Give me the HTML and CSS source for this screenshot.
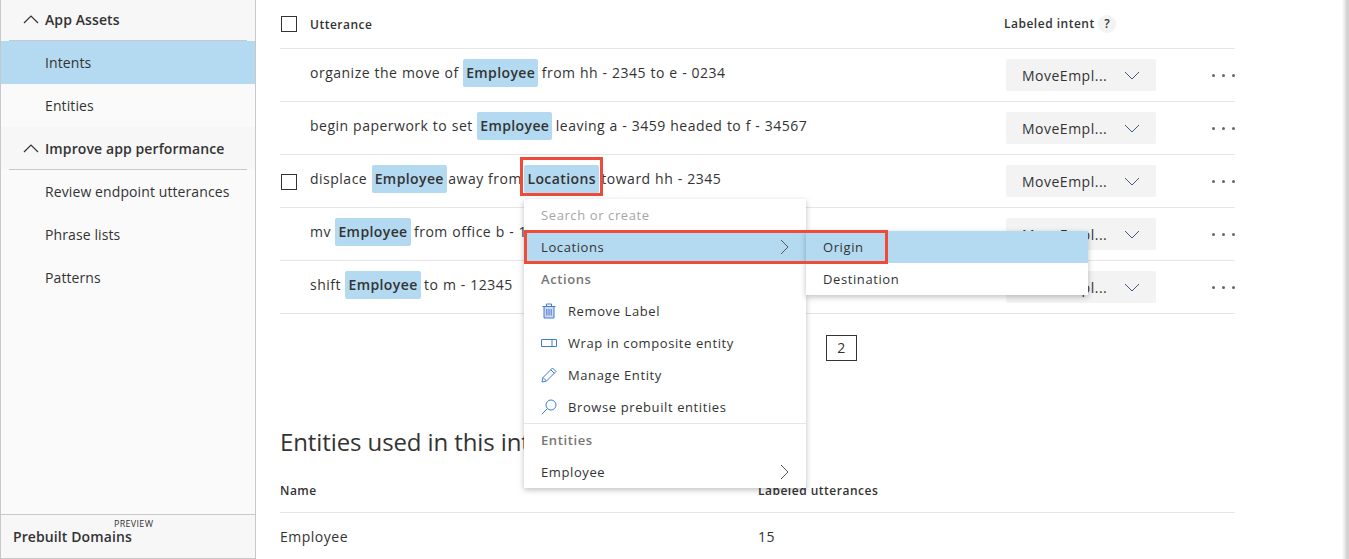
FILE: index.html
```html
<!DOCTYPE html>
<html lang="en">

<head>
    <meta charset="UTF-8">
    <title>Intents</title>
    <link rel="stylesheet" href="styles.css">
</head>

<body>
    <div class="app">
        <nav class="sidebar">
            <div class="nav-scroll">
                <div class="nav-head nav-head-first">
                    <svg class="caret" width="16" height="9" viewBox="0 0 16 9"><path d="M1 8L8 1l7 7" /></svg>
                    App Assets
                </div>
                <a class="nav-item active">Intents</a>
                <a class="nav-item">Entities</a>
                <div class="nav-head">
                    <svg class="caret" width="16" height="9" viewBox="0 0 16 9"><path d="M1 8L8 1l7 7" /></svg>
                    Improve app performance
                </div>
                <a class="nav-item">Review endpoint utterances</a>
                <a class="nav-item">Phrase lists</a>
                <a class="nav-item">Patterns</a>
            </div>
            <div class="nav-foot">
                <span class="preview">PREVIEW</span>
                <span class="foot-title">Prebuilt Domains</span>
            </div>
        </nav>

        <main class="content">
            <div class="table-row table-top">
                <div class="check-cell"><span class="check"></span></div>
                <div class="text-cell head-text">Utterance</div>
                <div class="head-text">Labeled intent <span class="help">?</span></div>
            </div>

            <div class="table-row">
                <div class="check-cell"></div>
                <div class="text-cell">organize the move of <span class="tag">Employee</span> from hh - 2345 to e - 0234</div>
                <div class="intent-cell"><div class="intent">MoveEmpl...<svg width="16" height="9" viewBox="0 0 16 9"><path d="M1 1l7 7 7-7" /></svg></div></div>
                <div class="more-cell"><span class="dot"></span><span class="dot"></span><span class="dot"></span></div>
            </div>
            <div class="table-row">
                <div class="check-cell"></div>
                <div class="text-cell">begin paperwork to set <span class="tag">Employee</span> leaving a - 3459 headed to f - 34567</div>
                <div class="intent-cell"><div class="intent">MoveEmpl...<svg width="16" height="9" viewBox="0 0 16 9"><path d="M1 1l7 7 7-7" /></svg></div></div>
                <div class="more-cell"><span class="dot"></span><span class="dot"></span><span class="dot"></span></div>
            </div>
            <div class="table-row">
                <div class="check-cell"><span class="check"></span></div>
                <div class="text-cell">displace <span class="tag tag-first">Employee</span> away from <span class="tag tag-second">Locations</span> toward hh - 2345</div>
                <div class="intent-cell"><div class="intent">MoveEmpl...<svg width="16" height="9" viewBox="0 0 16 9"><path d="M1 1l7 7 7-7" /></svg></div></div>
                <div class="more-cell"><span class="dot"></span><span class="dot"></span><span class="dot"></span></div>
            </div>
            <div class="table-row">
                <div class="check-cell"></div>
                <div class="text-cell">mv <span class="tag">Employee</span> from office b - 1</div>
                <div class="intent-cell"><div class="intent">MoveEmpl...<svg width="16" height="9" viewBox="0 0 16 9"><path d="M1 1l7 7 7-7" /></svg></div></div>
                <div class="more-cell"><span class="dot"></span><span class="dot"></span><span class="dot"></span></div>
            </div>
            <div class="table-row">
                <div class="check-cell"></div>
                <div class="text-cell">shift <span class="tag">Employee</span> to m - 12345</div>
                <div class="intent-cell"><div class="intent">MoveEmpl...<svg width="16" height="9" viewBox="0 0 16 9"><path d="M1 1l7 7 7-7" /></svg></div></div>
                <div class="more-cell"><span class="dot"></span><span class="dot"></span><span class="dot"></span></div>
            </div>

            <div class="pager"><span class="page">2</span></div>

            <h2 class="section-title">Entities used in this intent</h2>

            <div class="entity-row entity-top">
                <div class="entity-name head-text">Name</div>
                <div class="head-text">Labeled utterances</div>
            </div>
            <div class="entity-row">
                <div class="entity-name">Employee</div>
                <div>15</div>
            </div>
        </main>

        <div class="panel-edge"></div>
    </div>

    <!-- popups over the table -->
    <div class="mark mark-tag"></div>

    <div class="menu">
        <div class="menu-row search-hint">Search or create</div>
        <div class="menu-row selected">Locations
            <svg class="arrow" width="9" height="16" viewBox="0 0 9 16"><path d="M1 1l7 7-7 7" /></svg>
        </div>
        <div class="menu-row menu-label">Actions</div>
        <div class="menu-row icon-row">
            <svg class="menu-icon" width="16" height="16" viewBox="0 0 16 16">
                <path class="fill-soft" d="M3 3.5h10V15H3z" />
                <path d="M1.5 3.5h13M5.5 3.5V1h5v2.5M3 3.5V15h10V3.5M5.8 6v6.5M8 6v6.5M10.2 6v6.5" />
            </svg>
            Remove Label
        </div>
        <div class="menu-row icon-row">
            <svg class="menu-icon" width="16" height="16" viewBox="0 0 16 16">
                <path d="M.5 4.5h15v7H.5zM11 4.5v7" />
            </svg>
            Wrap in composite entity
        </div>
        <div class="menu-row icon-row">
            <svg class="menu-icon" width="16" height="16" viewBox="0 0 16 16">
                <path d="M1 15l1-4.5L11.5 1 15 4.5 5.5 14zM2 10.5L5.5 14M9.8 2.8l3.4 3.4" />
            </svg>
            Manage Entity
        </div>
        <div class="menu-row icon-row">
            <svg class="menu-icon" width="16" height="16" viewBox="0 0 16 16">
                <circle cx="10" cy="6" r="5" />
                <path d="M6.4 9.6L.8 15.2" />
            </svg>
            Browse prebuilt entities
        </div>
        <div class="menu-row menu-label menu-split">Entities</div>
        <div class="menu-row">Employee
            <svg class="arrow" width="9" height="16" viewBox="0 0 9 16"><path d="M1 1l7 7-7 7" /></svg>
        </div>
    </div>

    <div class="menu submenu">
        <div class="menu-row selected">Origin</div>
        <div class="menu-row">Destination</div>
    </div>

    <div class="mark mark-menu"></div>
</body>

</html>
```
FILE: styles.css
```css
* {
    box-sizing: border-box;
}

html,
body {
    height: 100%;
}

body {
    margin: 0;
    overflow: hidden;
    background: white;
    color: #333;
    font-family: "Open Sans", Arial, sans-serif;
    font-size: 14px;
    letter-spacing: 0.1px;
}

.app {
    display: flex;
    height: 559px;
}

.sidebar {
    width: 256px;
    flex: none;
    display: flex;
    flex-direction: column;
    background: #fafafa;
    border-left: 1px solid #c8c8c8;
    border-right: 1px solid #c8c8c8;
    border-bottom: 1px solid #c8c8c8;
}

.nav-scroll {
    flex: 1;
}

.nav-head {
    height: 43px;
    padding-left: 22px;
    display: flex;
    align-items: center;
    gap: 6px;
    background: #f7f7f7;
    font-weight: 600;
    position: relative;
}

.nav-head::after {
    content: "";
    position: absolute;
    left: 8px;
    right: 8px;
    bottom: 0;
    border-bottom: 1px solid #c8c8c8;
}

.nav-head-first {
    height: 41px;
    padding-bottom: 2px;
}

.caret {
    fill: none;
    stroke: #333;
    stroke-width: 1.2;
}

.nav-item {
    display: flex;
    align-items: center;
    height: 43px;
    padding-left: 44px;
}

.nav-item.active {
    background: #b3daf1;
}

.nav-foot {
    height: 44px;
    padding-left: 12px;
    background: #f7f7f7;
    border-top: 1px solid #c8c8c8;
    position: relative;
}

.preview {
    position: absolute;
    left: 113px;
    top: 2px;
    font-size: 9px;
    letter-spacing: 0.3px;
}

.foot-title {
    display: block;
    padding-top: 12px;
    font-weight: 600;
}

.content {
    flex: 1;
    padding-left: 24px;
    min-width: 0;
    letter-spacing: 0.5px;
}

.table-row {
    width: 955px;
    height: 53px;
    display: flex;
    align-items: center;
    border-bottom: 1px solid #e6e6e6;
}

.table-top {
    height: 49px;
}

.check-cell {
    width: 30px;
    flex: none;
    padding-left: 1px;
    display: flex;
    padding-top: 1px;
}

.table-top .check-cell {
    padding-top: 0;
}

.check {
    width: 16px;
    height: 16px;
    border: 1px solid #333;
}

.text-cell {
    width: 696px;
    flex: none;
    padding-bottom: 4px;
    white-space: nowrap;
    overflow: hidden;
    word-spacing: 0.3px;
}

.head-text {
    font-size: 12px;
    font-weight: 600;
}

.table-top .text-cell {
    width: 694px;
    padding-bottom: 0;
}

.help {
    display: inline-block;
    width: 18px;
    height: 18px;
    border-radius: 50%;
    background: #f3f3f3;
    text-align: center;
    line-height: 18px;
    vertical-align: middle;
}

.tag {
    display: inline-block;
    height: 28px;
    line-height: 28px;
    padding: 0 3px;
    margin-right: -1px;
    border-radius: 2px;
    background: #b3daf1;
    font-weight: 600;
    letter-spacing: 0.4px;
}

.tag-first {
    margin-right: -3px;
}

.tag-second {
    margin-left: -2px;
    margin-right: -2px;
}

.intent-cell {
    width: 206px;
    flex: none;
}

.intent {
    width: 150px;
    height: 32px;
    padding-left: 16px;
    display: flex;
    align-items: center;
    justify-content: space-between;
    padding-right: 16px;
    border-radius: 2px;
    background: #f3f3f3;
}

.intent svg {
    fill: none;
    stroke: #2b4a6b;
    stroke-width: 0.9;
}

.more-cell {
    width: 23px;
    flex: none;
    display: flex;
    gap: 7px;
    padding-top: 1px;
    overflow: hidden;
}

.dot {
    width: 3px;
    height: 3px;
    flex: none;
    border-radius: 50%;
    background: #666;
}

.pager {
    padding: 21px 0 0 546px;
}

.page {
    display: block;
    width: 31px;
    height: 26px;
    border: 1px solid #333;
    text-align: center;
    line-height: 24px;
}

.section-title {
    margin: 65px 0 0;
    font-size: 24px;
    line-height: 32px;
    font-weight: 400;
    white-space: nowrap;
    letter-spacing: -0.1px;
}

.entity-row {
    width: 955px;
    display: flex;
    align-items: center;
    height: 47px;
}

.entity-top {
    height: 55px;
    padding-top: 10px;
    border-bottom: 1px solid #e6e6e6;
}

.entity-name {
    width: 478px;
    flex: none;
}

.panel-edge {
    width: 9px;
    flex: none;
    background: linear-gradient(to right, #fff 0%, #fff 20%, #eee 45%, #ccc 85%, #d8d8d8 100%);
}

.menu {
    position: absolute;
    left: 524px;
    top: 199px;
    width: 282px;
    background: white;
    box-shadow: 0 2px 6px rgba(0, 0, 0, 0.25);
    letter-spacing: 0.6px;
}

.submenu {
    left: 806px;
    top: 231px;
}

.menu-row {
    height: 32px;
    padding: 0 17px;
    display: flex;
    align-items: center;
    justify-content: space-between;
    font-size: 13px;
}

.selected {
    background: #b3daf1;
}

.search-hint {
    color: #a6a6a6;
}

.menu-label {
    color: #767676;
    font-weight: 600;
}

.menu-split {
    height: 33px;
    border-top: 1px solid #e6e6e6;
}

.icon-row {
    justify-content: flex-start;
    gap: 11px;
}

.menu-icon {
    fill: none;
    stroke: #3a7fd5;
    stroke-width: 1;
}

.fill-soft {
    fill: #d9d5ee;
    stroke: none;
}

.arrow {
    fill: none;
    stroke: #555;
}

.mark {
    position: absolute;
    border: 3px solid #f04a38;
}

.mark-tag {
    left: 520px;
    top: 157px;
    width: 83px;
    height: 39px;
}

.mark-menu {
    left: 524px;
    top: 230px;
    width: 364px;
    height: 34px;
}
```
